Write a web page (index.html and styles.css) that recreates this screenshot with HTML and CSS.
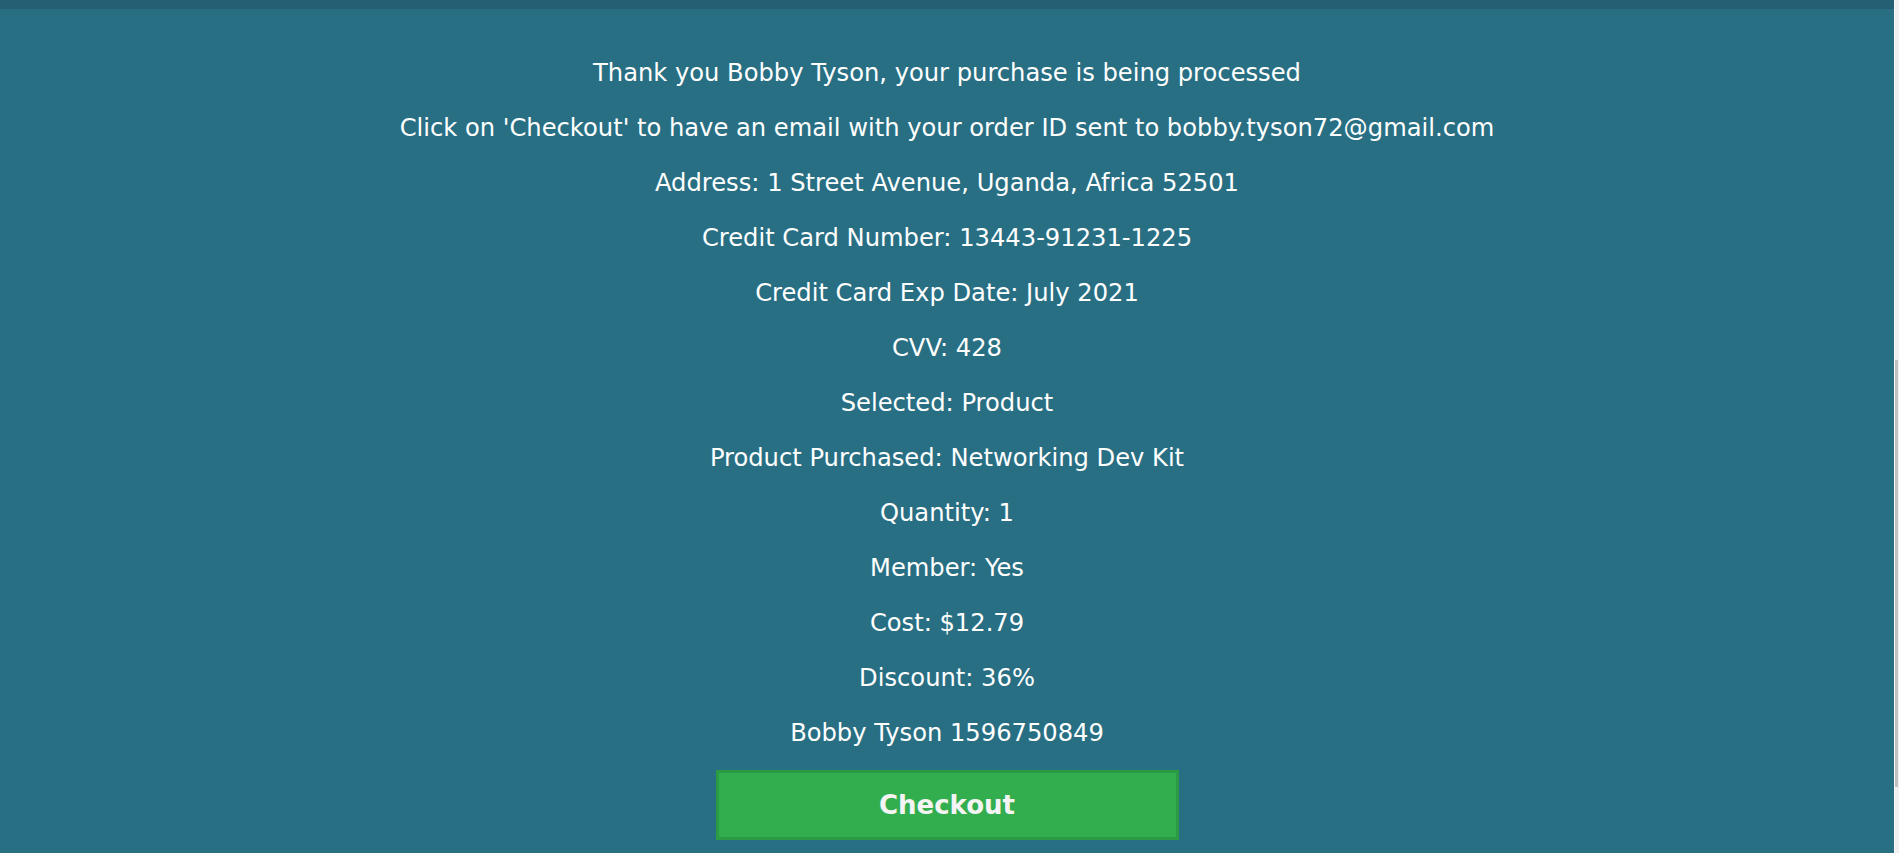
FILE: index.html
```html
<!DOCTYPE html>
<html lang="en">
<head>
<meta charset="utf-8">
<title>Order confirmation</title>
<link rel="stylesheet" href="styles.css">
</head>
<body>
<div class="app">
  <main class="main">
    <div class="topbar"></div>
    <section class="summary">
      <p class="line">Thank you Bobby Tyson, your purchase is being processed</p>
      <p class="line">Click on 'Checkout' to have an email with your order ID sent to bobby.tyson72@gmail.com</p>
      <p class="line">Address: 1 Street Avenue, Uganda, Africa 52501</p>
      <p class="line">Credit Card Number: 13443-91231-1225</p>
      <p class="line">Credit Card Exp Date: July 2021</p>
      <p class="line">CVV: 428</p>
      <p class="line">Selected: Product</p>
      <p class="line">Product Purchased: Networking Dev Kit</p>
      <p class="line">Quantity: 1</p>
      <p class="line">Member: Yes</p>
      <p class="line">Cost: $12.79</p>
      <p class="line">Discount: 36%</p>
      <p class="line last">Bobby Tyson 1596750849</p>
      <button class="checkout" type="button">Checkout</button>
    </section>
  </main>
  <div class="scrollbar"><div class="thumb"></div></div>
</div>
</body>
</html>
```
FILE: styles.css
```css
html, body {
  margin: 0;
  padding: 0;
  height: 100%;
  overflow: hidden;
}

body {
  font-family: "DejaVu Sans", Verdana, sans-serif;
  background: #296f84;
}

.app {
  display: flex;
  height: 853px;
}

.main {
  flex: 1;
  display: flex;
  flex-direction: column;
  background: #296f84;
}

.topbar {
  height: 9px;
  background: #245f73;
}

.summary {
  display: flex;
  flex-direction: column;
  align-items: center;
  padding-top: 50px;
  color: #ffffff;
  text-align: center;
}

.line {
  margin: 0 0 27px;
  font-size: 24.2px;
  line-height: 28px;
}

.line.last {
  margin-bottom: 23px;
}

.checkout {
  width: 463px;
  height: 70px;
  border: 3px solid #2a9a45;
  background: #33ae4f;
  color: #f4f4f4;
  font-family: "DejaVu Sans", Verdana, sans-serif;
  font-weight: bold;
  font-size: 26px;
  padding: 0;
  cursor: pointer;
}

.scrollbar {
  width: 4px;
  display: flex;
  flex-direction: column;
  background: #f0f0f0;
  border-left: 1px solid #fafafa;
  box-sizing: content-box;
}

.thumb {
  margin-top: 360px;
  height: 427px;
  width: 3px;
  background: #c1c1c1;
}
```
